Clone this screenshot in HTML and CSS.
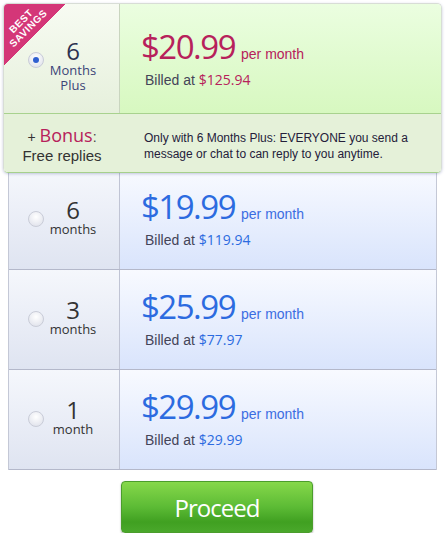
FILE: index.html
```html
<!DOCTYPE html>
<html>
<head>
<meta charset="utf-8">
<link rel="stylesheet" href="styles.css">
</head>
<body>
<div class="plans">
  <div class="featured">
    <div class="ribbon"><span>BEST<br>SAVINGS</span></div>
    <div class="frow">
      <div class="term">
        <span class="radio checked"></span>
        <div class="len"><div class="num">6</div><div class="unit">Months<br>Plus</div></div>
      </div>
      <div class="price">
        <div class="amount"><span class="big">$20.99</span><span class="per">per month</span></div>
        <div class="billed">Billed at <span class="val">$125.94</span></div>
      </div>
    </div>
    <div class="bonus">
      <div class="bonus-title">
        <div class="bline"><span class="plus">+</span> <span class="bword">Bonus</span><span class="colon">:</span></div>
        <div class="free">Free replies</div>
      </div>
      <div class="bonus-text">Only with 6 Months Plus: EVERYONE you send a message or chat to can reply to you anytime.</div>
    </div>
  </div>
  <div class="table">
    <div class="trow">
      <div class="term"><span class="radio"></span><div class="len"><div class="num">6</div><div class="unit">months</div></div></div>
      <div class="price">
        <div class="amount"><span class="big">$19.99</span><span class="per">per month</span></div>
        <div class="billed">Billed at <span class="val">$119.94</span></div>
      </div>
    </div>
    <div class="trow">
      <div class="term"><span class="radio"></span><div class="len"><div class="num">3</div><div class="unit">months</div></div></div>
      <div class="price">
        <div class="amount"><span class="big">$25.99</span><span class="per">per month</span></div>
        <div class="billed">Billed at <span class="val">$77.97</span></div>
      </div>
    </div>
    <div class="trow">
      <div class="term"><span class="radio"></span><div class="len"><div class="num">1</div><div class="unit">month</div></div></div>
      <div class="price">
        <div class="amount"><span class="big">$29.99</span><span class="per">per month</span></div>
        <div class="billed">Billed at <span class="val">$29.99</span></div>
      </div>
    </div>
  </div>
  <div class="actions"><button class="proceed">Proceed</button></div>
</div>
</body>
</html>
```
FILE: styles.css
```css
* { box-sizing: border-box; }
body {
  margin: 0;
  background: #fff;
  font-family: "Liberation Sans", Arial, sans-serif;
}
.plans { width: 448px; padding-top: 3px; }

.featured {
  position: relative;
  z-index: 1;
  margin-left: 3px;
  width: 439px;
  border: 1px solid #d8ddd6;
  border-bottom-color: #a6d08c;
  border-radius: 5px;
  box-shadow: 0 1px 3px rgba(90, 100, 160, 0.35);
  overflow: hidden;
}
.ribbon {
  position: absolute;
  left: 0;
  top: 0;
  width: 61px;
  height: 61px;
  background: linear-gradient(135deg, #d43678 50%, transparent 50.5%);
  z-index: 2;
}
.ribbon span {
  position: absolute;
  left: 21px;
  top: 21px;
  transform: translate(-50%, -50%) rotate(-45deg);
  color: #fff;
  font: bold 10px/10px "Liberation Sans", Arial, sans-serif;
  text-align: center;
  letter-spacing: 0.6px;
  white-space: nowrap;
}
.frow { display: flex; height: 109px; }
.frow .term {
  width: 116px;
  border-right: 1px solid #c9d5bf;
  background: linear-gradient(#f7fbf2, #e6f0dc);
  padding-left: 24px;
}
.frow .term .radio { margin-top: 48px; }
.frow .term .len { margin-top: 34px; }
.frow .price {
  flex: 1;
  background: linear-gradient(#ebfee0, #d7f8c0);
  padding-top: 26px;
}
.term { display: flex; align-items: flex-start; }
.radio {
  width: 16px;
  height: 16px;
  border-radius: 50%;
  border: 1px solid #c9ccd8;
  background: radial-gradient(circle at 50% 35%, #ffffff, #e4e6ee 75%);
  flex: none;
  position: relative;
}
.radio.checked::after {
  content: "";
  position: absolute;
  left: 4px;
  top: 4px;
  width: 6px;
  height: 6px;
  border-radius: 50%;
  background: #2f5fd0;
}
.len {
  width: 50px;
  margin-left: 4px;
  text-align: center;
  font-family: "Open Sans", sans-serif;
}
.num { font-size: 24px; line-height: 25px; color: #333; }
.unit { font-size: 13px; line-height: 15px; color: #333; }
.featured .num { color: #2c3250; }
.featured .unit { color: #3c4478; }

.price { padding-left: 21px; }
.amount { line-height: 34px; white-space: nowrap; }
.big {
  font-family: "Open Sans", sans-serif;
  font-size: 33px;
  letter-spacing: -1.5px;
}
.per { font-size: 14px; margin-left: 6px; }
.billed {
  margin-top: 0;
  margin-left: 4px;
  font-size: 14px;
  line-height: 17px;
  color: #444458;
}
.val { font-family: "Open Sans", sans-serif; font-size: 14px; }
.featured .big, .featured .per, .featured .val { color: #b7215b; }
.table .big, .table .val { color: #2c6be0; }
.table .per { color: #3b6de2; }

.bonus {
  display: flex;
  height: 59px;
  border-top: 1px solid #a8d28e;
  background: #e5f1d9;
}
.bonus-title {
  width: 116px;
  padding-top: 11px;
  text-align: center;
  color: #333;
}
.bline { font-size: 14px; line-height: 20px; }
.bword { font-family: "Open Sans", sans-serif; font-size: 18px; color: #b7215b; }
.colon { color: #444; }
.free { font-size: 15px; line-height: 17px; color: #333; }
.bonus-text {
  padding-top: 16px;
  padding-left: 24px;
  width: 305px;
  font-size: 12px;
  line-height: 16px;
  color: #24203a;
}

.table {
  margin-left: 8px;
  margin-top: -3px;
  width: 429px;
  border-left: 1px solid #c4c8d6;
  border-right: 1px solid #c4c8d6;
}
.trow {
  display: flex;
  height: 100px;
  border-bottom: 1px solid #b4b8ca;
}
.trow .term {
  width: 111px;
  border-right: 1px solid #c0c4d4;
  background: linear-gradient(#f5f7fc, #dfe4f1);
  padding-left: 19px;
}
.trow .term .radio { margin-top: 41px; }
.trow .term .len { margin-top: 27px; }
.trow .price {
  flex: 1;
  background: linear-gradient(#f8faff, #d9e4fc);
  padding-top: 20px;
}

.actions { padding: 11px 0 0 121px; }
.proceed {
  width: 192px;
  height: 52px;
  border: 1px solid #4b9d2c;
  border-radius: 4px;
  background: linear-gradient(#86d84a, #5cbb35 50%, #40a021 80%, #4aa82b);
  box-shadow: 0 1px 2px rgba(0, 0, 0, 0.35);
  color: #fff;
  font-family: "Open Sans", sans-serif;
  font-size: 24px;
  letter-spacing: -1px;
  padding: 0;
  cursor: pointer;
}
```
